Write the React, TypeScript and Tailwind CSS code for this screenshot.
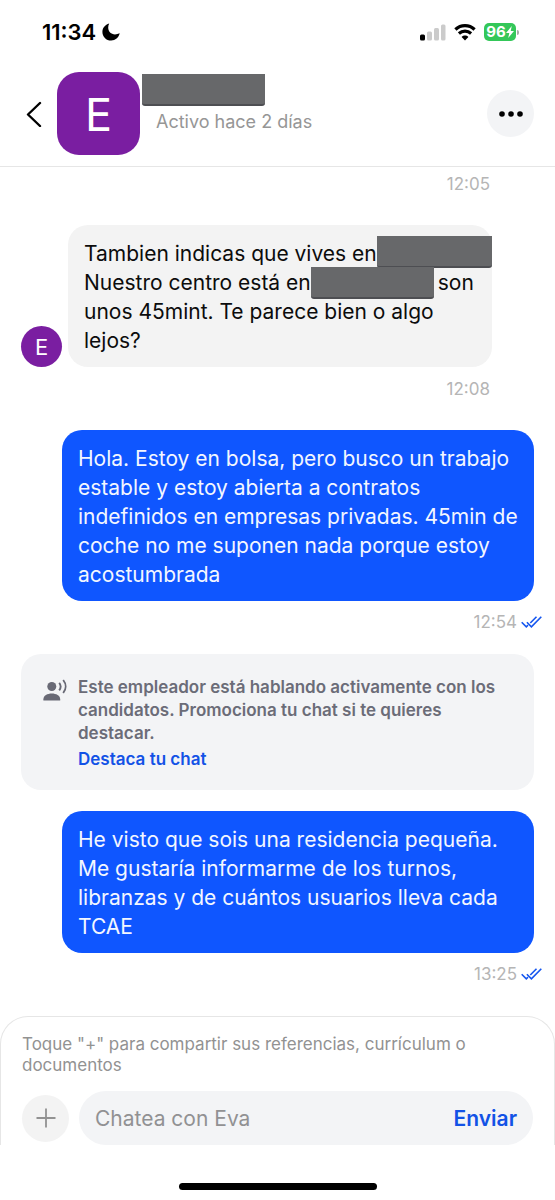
import type { ReactNode } from 'react'

const SENT_FIRST = [
  'Hola. Estoy en bolsa, pero busco un trabajo',
  'estable y estoy abierta a contratos',
  'indefinidos en empresas privadas. 45min de',
  'coche no me suponen nada porque estoy',
  'acostumbrada',
]

const SENT_SECOND = [
  'He visto que sois una residencia pequeña.',
  'Me gustaría informarme de los turnos,',
  'libranzas y de cuántos usuarios lleva cada',
  'TCAE',
]

// Grey block that hides a name or a place
function Redacted() {
  return <span className="block h-8 w-[123px] rounded-b-[3px] border-b-2 border-[#4d4e52] bg-[#67686a]" />
}

function StatusBar() {
  return (
    <div className="flex h-16 items-center justify-between pr-9 pl-[42px]">
      <div className="flex items-center gap-[6px]">
        <span className="text-[22px] leading-6 font-semibold">11:34</span>
        <svg width="18" height="18" viewBox="0 0 18 18" aria-hidden="true">
          <path
            d="M7.200.5C6.500 1.800 6.200 3.200 6.200 4.600c0 4.200 2.800 6.800 6.800 6.800 1.600 0 3.100-.3 4.700-1.100C16.700 14.600 13.300 17.500 9.200 17.500 4.200 17.500.4 13.700.4 8.900.4 5 3 1.700 7.200.5z"
            fill="#000"
          />
        </svg>
      </div>
      <div className="flex items-center gap-2">
        <svg width="26" height="17" viewBox="0 0 26 17" aria-hidden="true">
          <rect x="0" y="10.500" width="5" height="6" rx="1.500" fill="#000" />
          <rect x="7" y="7.500" width="5" height="9" rx="1.500" fill="#cbcbcb" />
          <rect x="14" y="4" width="5" height="12.500" rx="1.500" fill="#cbcbcb" />
          <rect x="21" y="0.500" width="4.500" height="16" rx="1.500" fill="#cbcbcb" />
        </svg>
        <svg width="22" height="17" viewBox="0 0 22 17" aria-hidden="true">
          <path d="M1.400 5.500C6.800.3 15.200.3 20.600 5.500" fill="none" stroke="#000" strokeWidth="3.200" />
          <path d="M4.900 9.500c3.500-3.200 8.700-3.200 12.200 0" fill="none" stroke="#000" strokeWidth="3.100" />
          <path d="M7.600 13c2-1.900 4.800-1.900 6.800 0L11 16.500z" fill="#000" />
        </svg>
        <div className="flex items-center gap-px">
          <div className="flex h-[18px] w-8 items-center justify-center rounded-[5px] bg-[#34c759] text-white">
            <span className="text-[15px] leading-[18px] font-bold">96</span>
            <svg width="8" height="12" viewBox="0 0 8 12" aria-hidden="true">
              <path d="M5.800 0 0 6.900h3.300L2.200 12 8 5H4.700z" fill="currentColor" />
            </svg>
          </div>
          <span className="h-[5px] w-[2px] rounded-r-full bg-[#a8a8a8]" />
        </div>
      </div>
    </div>
  )
}

function ChatHeader() {
  return (
    <header className="flex h-[103px] items-start border-b border-[#e6e6e6] pt-2 pr-[21px]">
      <button aria-label="Volver" className="flex h-[83px] w-[57px] shrink-0 items-center pl-[26px]">
        <svg width="16" height="26" viewBox="0 0 16 26" fill="none" aria-hidden="true">
          <path d="M14 2 2 13.500 14 25" stroke="#000" strokeWidth="2.400" strokeLinecap="round" strokeLinejoin="round" />
        </svg>
      </button>
      <div className="flex size-[83px] shrink-0 items-center justify-center rounded-[22px] bg-[#7a1ea1] pt-[2px] text-[45px] leading-none text-white">
        E
      </div>
      <div className="flex min-w-0 flex-1 flex-col pt-[2px] pl-[2px]">
        <Redacted />
        <p className="mt-1 pl-[14px] text-[18px] leading-6 text-[#969696]">Activo hace 2 días</p>
      </div>
      <button
        aria-label="Más opciones"
        className="mt-[18px] flex size-[47px] shrink-0 items-center justify-center rounded-full bg-[#f3f4f6]"
      >
        <svg width="24" height="6" viewBox="0 0 24 6" aria-hidden="true">
          <circle cx="3" cy="3" r="2.800" />
          <circle cx="12" cy="3" r="2.800" />
          <circle cx="21" cy="3" r="2.800" />
        </svg>
      </button>
    </header>
  )
}

function DoubleCheck() {
  return (
    <svg width="21" height="13" viewBox="0 0 21 13" fill="none" stroke="#1556ef" strokeWidth="1.600" aria-label="Leído">
      <path d="M.7 6.300 5.300 10.800 7 9.200M9.300 7 15.500.7" />
      <path d="M5.900 6.300 10.400 10.800 20.300.7" />
    </svg>
  )
}

function Stamp({ time, read }: { time: string; read?: boolean }) {
  return (
    <div className={`flex h-5 items-center justify-end gap-1 ${read ? 'pr-[13px]' : 'pr-[65px]'}`}>
      <time className="text-[17px] leading-5 text-[#b5b5b5]">{time}</time>
      {read && <DoubleCheck />}
    </div>
  )
}

function SentBubble({ lines }: { lines: string[] }) {
  return (
    <div className="mr-[21px] ml-[62px] rounded-[20px] bg-[#0f56ff] px-4 pt-[14px] pb-3 text-[21px] leading-[29px] whitespace-nowrap text-[#f3f6ff]">
      {lines.map(line => (
        <p key={line}>{line}</p>
      ))}
    </div>
  )
}

function Line({ children }: { children: ReactNode }) {
  return <p className="flex h-[29px] items-center">{children}</p>
}

function ReceivedMessage() {
  return (
    <div className="flex items-end gap-[6px] pr-[63px] pl-[21px]">
      <div className="flex size-[41px] shrink-0 items-center justify-center rounded-full bg-[#7a1ea1] text-[22px] leading-none text-white">
        E
      </div>
      <div className="min-w-0 flex-1 rounded-[20px] bg-[#f3f3f3] pt-[14px] pb-3 pl-4 text-[21px] leading-[29px] whitespace-nowrap text-[#0c0c0c]">
        <div className="flex h-[29px] items-end justify-between">
          <p>Tambien indicas que vives en</p>
          <Redacted />
        </div>
        <Line>
          <span>Nuestro centro está en</span>
          <Redacted />
          <span className="ml-1">son</span>
        </Line>
        <Line>unos 45mint. Te parece bien o algo</Line>
        <Line>lejos?</Line>
      </div>
    </div>
  )
}

function PromoBanner() {
  return (
    <section className="mx-[21px] flex rounded-[20px] bg-[#f3f4f6] pt-[22px] pb-[19px] pl-[22px]">
      <svg className="mt-[2px] mr-[11px] shrink-0" width="24" height="24" viewBox="0 0 24 24" fill="none" aria-hidden="true">
        <circle cx="8.800" cy="8.500" r="4.500" fill="#686975" />
        <path d="M.4 22.500v-1.300c0-3.600 4-5.700 8.400-5.700s8.400 2.100 8.400 5.700v1.300z" fill="#686975" />
        <path d="M16.200 4.800c1.800 2.300 1.800 5.200 0 7.600M20.200 2c3.200 4 3.200 9.200 0 13" stroke="#686975" strokeWidth="1.900" />
      </svg>
      <div className="text-[17px] leading-[23px] font-semibold whitespace-nowrap text-[#6b6c78]">
        <p>Este empleador está hablando activamente con los</p>
        <p>candidatos. Promociona tu chat si te quieres</p>
        <p>destacar.</p>
        <a href="#destacar" className="mt-[3px] block text-[#1252e6]">
          Destaca tu chat
        </a>
      </div>
    </section>
  )
}

function Composer() {
  return (
    <form
      onSubmit={e => e.preventDefault()}
      className="rounded-t-[28px] border border-b-0 border-[#e6e6e6] px-[21px] pt-[17px]"
    >
      <p className="text-[17px] leading-[21px] text-[#929292]">
        Toque "+" para compartir sus referencias, currículum o
        <br />
        documentos
      </p>
      <div className="mt-[15px] flex items-center gap-[10px]">
        <button
          type="button"
          aria-label="Adjuntar"
          className="flex size-[47px] shrink-0 items-center justify-center rounded-full bg-[#f3f3f3]"
        >
          <svg width="20" height="20" viewBox="0 0 20 20" stroke="#929292" strokeWidth="1.800" aria-hidden="true">
            <path d="M10 .5v19M.5 10h19" />
          </svg>
        </button>
        <div className="flex h-[54px] min-w-0 flex-1 items-center rounded-full bg-[#f3f4f6] px-4 pt-[2px]">
          <input
            aria-label="Mensaje"
            placeholder="Chatea con Eva"
            className="min-w-0 flex-1 bg-transparent text-[21px] leading-7 outline-none placeholder:text-[#919193]"
          />
          <button type="submit" className="text-[21px] leading-7 font-semibold text-[#1252e6]">
            Enviar
          </button>
        </div>
      </div>
    </form>
  )
}

export default function App() {
  return (
    <div className="flex min-h-screen flex-col overflow-hidden bg-white font-['Inter','Liberation_Sans',sans-serif] text-black">
      <StatusBar />
      <ChatHeader />
      <main className="flex flex-col pt-[7px] pb-8">
        <Stamp time="12:05" />
        <div className="mt-[31px] mb-3">
          <ReceivedMessage />
        </div>
        <Stamp time="12:08" />
        <div className="mt-[31px] mb-[11px]">
          <SentBubble lines={SENT_FIRST} />
        </div>
        <Stamp time="12:54" read />
        <div className="mt-[22px] mb-[21px]">
          <PromoBanner />
        </div>
        <div className="mb-[11px]">
          <SentBubble lines={SENT_SECOND} />
        </div>
        <Stamp time="13:25" read />
      </main>
      <Composer />
      <div className="mt-auto flex justify-center pb-[10px]">
        <div className="h-[7px] w-[198px] rounded-full bg-black" />
      </div>
    </div>
  )
}
